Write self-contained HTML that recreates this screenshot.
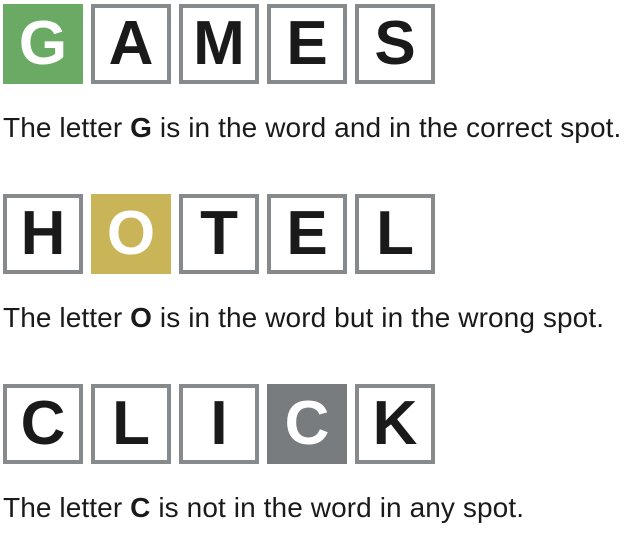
<!DOCTYPE html>
<html><head><style>
body{margin:0;width:640px;height:534px;background:#fff;font-family:"Liberation Sans",Arial,sans-serif;color:#1a1a1b;position:relative;overflow:hidden}
.row{position:absolute;left:3px;display:flex;gap:8px}
.t{width:80px;height:80px;box-sizing:border-box;border:4px solid #878a8c;display:flex;align-items:center;justify-content:center;font-weight:bold;font-size:62px;line-height:1;color:#1a1a1b}
.g{background:#6aaa64;border:none;color:#fff}
.y{background:#c9b458;border:none;color:#fff}
.n{background:#787c7e;border:none;color:#fff}
.p{position:absolute;left:3px;margin:0;font-size:28px;line-height:32px;white-space:nowrap;letter-spacing:0.1px}
</style></head><body>
<div class="row" style="top:4px"><div class="t g">G</div><div class="t">A</div><div class="t">M</div><div class="t">E</div><div class="t">S</div></div>
<p class="p" style="top:112px">The letter <b>G</b> is in the word and in the correct spot.</p>
<div class="row" style="top:194px"><div class="t">H</div><div class="t y">O</div><div class="t">T</div><div class="t">E</div><div class="t">L</div></div>
<p class="p" style="top:302px">The letter <b>O</b> is in the word but in the wrong spot.</p>
<div class="row" style="top:384px"><div class="t">C</div><div class="t">L</div><div class="t">I</div><div class="t n">C</div><div class="t">K</div></div>
<p class="p" style="top:492px">The letter <b>C</b> is not in the word in any spot.</p>
</body></html>
